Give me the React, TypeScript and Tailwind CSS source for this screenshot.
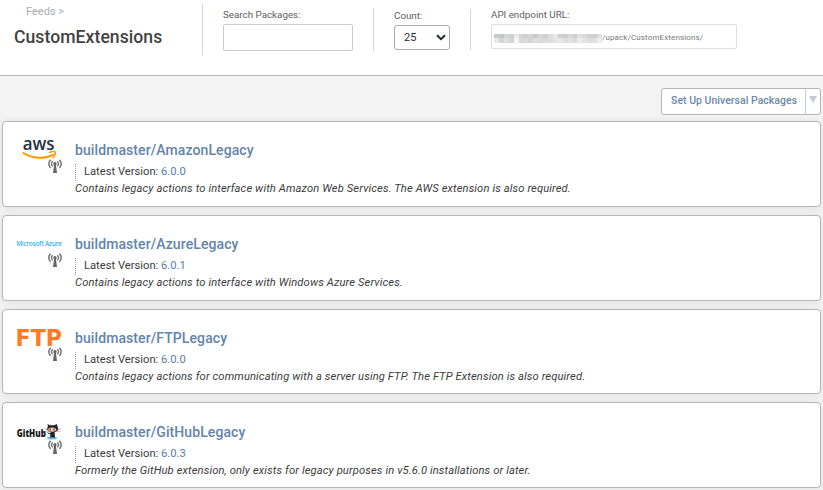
import React from "react";

type Pkg = {
  name: string;
  version: string;
  description: string;
  logo: React.ReactNode;
  card: string;
  text: string;
};

const AwsLogo = () => (
  <svg width="46" height="46" viewBox="0 0 46 46" className="block overflow-visible">
    <text x="5.800" y="14.900" fontFamily="'Open Sans', sans-serif" fontWeight="600" fontSize="18.500" fill="#252f3e" textLength="31.800" lengthAdjust="spacingAndGlyphs">aws</text>
    <path d="M6.4 18c9 5.800 21.500 6.200 29.500 1.800" fill="none" stroke="#f90" strokeWidth="2" strokeLinecap="round" />
    <path d="M32.500 17.500c2-1 5-1.300 5.700-.5.500 1-.4 3.900-2 5.500" fill="none" stroke="#f90" strokeWidth="1.600" strokeLinecap="round" />
  </svg>
);

const AzureLogo = () => (
  <svg width="46" height="46" viewBox="0 0 46 46" className="block overflow-visible">
    <text x="-0.400" y="17" fontFamily="'Open Sans', sans-serif" fontSize="6.400" fill="#1badea" stroke="#1badea" strokeWidth="0.150" textLength="45" lengthAdjust="spacingAndGlyphs">Microsoft Azure</text>
  </svg>
);

const FtpLogo = () => (
  <svg width="46" height="46" viewBox="0 0 46 46" className="block overflow-visible">
    <text x="-1.500" y="22.600" fontFamily="'DejaVu Sans', sans-serif" fontWeight="700" fontSize="22.500" fill="#ff7a22" textLength="46.500" lengthAdjust="spacingAndGlyphs">FTP</text>
  </svg>
);

const GitHubLogo = () => (
  <svg width="46" height="46" viewBox="0 0 46 46" className="block overflow-visible">
    <text x="-0.200" y="20.600" fontFamily="'Open Sans', sans-serif" fontWeight="800" fontSize="10.500" fill="#151515" textLength="29" lengthAdjust="spacingAndGlyphs">GitHub</text>
    <g transform="translate(-.5 -2.700)">
      <ellipse cx="35.500" cy="24.700" rx="5" ry="1.500" fill="#66c5ee" />
      <path d="M31 10.700l2.500 1.200h4.200l2.700-1.200.7 2.800c1.400 3-.3 5-3 5.400l.5 5.300h-5l.3-3.200c-2 .2-2.500-1-3.500-1.700 1.600-.2 2 .9 3.500.5l.2-1c-3.200-.4-4.200-3-2.700-5.600z" fill="#252326" />
      <ellipse cx="35.700" cy="16.300" rx="4" ry="2.200" fill="#f3c6ac" />
      <path d="M33.700 15.300v1.900M37.700 15.300v1.900" stroke="#75382f" strokeWidth="1.300" />
      <path d="M28 15.700l3 .5M40.600 16.200l3.700-.5M28.300 18.500l2.900-1M40.500 17.500l3 .8" stroke="#777" strokeWidth="0.600" />
    </g>
  </svg>
);

const FeedIcon = () => (
  <svg width="14" height="15" viewBox="0 0 14 15" fill="none" stroke="#707070" className="block">
    <path d="M2.600.8C.2 2.800.2 6.800 2.600 8.800M11.400.8c2.400 2 2.400 6 0 8" strokeWidth="1.500" />
    <path d="M4.700 2.300c-1.400 1.400-1.400 3.600 0 5M9.300 2.300c1.400 1.400 1.400 3.600 0 5" strokeWidth="1.300" />
    <circle cx="7" cy="4.800" r="1.700" fill="#666" stroke="none" />
    <path d="M6.200 5h1.600l1.200 9H5z" fill="#666" stroke="none" />
  </svg>
);

const packages: Pkg[] = [
  { name: "buildmaster/AmazonLegacy", version: "6.0.0", description: "Contains legacy actions to interface with Amazon Web Services. The AWS extension is also required.", logo: <AwsLogo />, card: "h-[86px] mb-[8px]", text: "pt-[18px]" },
  { name: "buildmaster/AzureLegacy", version: "6.0.1", description: "Contains legacy actions to interface with Windows Azure Services.", logo: <AzureLogo />, card: "h-[86px] mb-[8px]", text: "pt-[18px]" },
  { name: "buildmaster/FTPLegacy", version: "6.0.0", description: "Contains legacy actions for communicating with a server using FTP. The FTP Extension is also required.", logo: <FtpLogo />, card: "h-[85px] mb-[8px]", text: "pt-[18px]" },
  { name: "buildmaster/GitHubLegacy", version: "6.0.3", description: "Formerly the GitHub extension, only exists for legacy purposes in v5.6.0 installations or later.", logo: <GitHubLogo />, card: "h-[86px]", text: "pt-[19px]" },
];

const PackageCard = ({ pkg }: { pkg: Pkg }) => (
  <article className={`flex rounded-[4px] border border-[#b5b5b5] bg-white pl-[14px] shadow-[0_1px_8px_rgba(0,0,0,0.08)] ${pkg.card}`}>
    <div className="relative mt-[13px] h-[46px] w-[46px] shrink-0">
      {pkg.logo}
      <div className="absolute top-[24px] left-[31px]"><FeedIcon /></div>
    </div>
    <div className={`ml-[12px] whitespace-nowrap ${pkg.text}`}>
      <h2 className="h-[20px] text-[14px] leading-[20px] font-medium tracking-[0.090px] text-[#6384ac]">{pkg.name}</h2>
      <div className="mt-[4px] h-[17px] border-l border-dotted border-[#999] pl-[8px] text-[11.200px] leading-[15px] text-[#3b3b3b]">
        Latest Version: <span className="text-[#587ca6]">{pkg.version}</span>
      </div>
      <p className="text-[11.200px] leading-[15px] tracking-[0.115px] text-[#3b3b3b] italic">{pkg.description}</p>
    </div>
  </article>
);

const mosaic = [
  "bg-[#c9caca]", "bg-[#c5c6c6]", "bg-[#d6d6d6]", "bg-[#d0d1d1]", "bg-[#ececec]", "bg-[#d4d5d5]", "bg-[#cecfcf]", "bg-[#d4d4d4]",
  "bg-[#c9caca]", "bg-[#d8d8d8]", "bg-[#d0d0d0]", "bg-[#dedede]", "bg-[#e7e7e7]", "bg-[#d0d0d0]", "bg-[#cdcece]", "bg-[#d6d6d6]",
  "bg-[#cccdcd]", "bg-[#e1e1e1]", "bg-[#dadada]", "bg-[#d0d1d1]", "bg-[#cecfcf]", "bg-[#dedede]",
  "bg-[#e8e8e8]", "bg-[#d4d4d4]", "bg-[#dedede]", "bg-[#d5d5d5]", "bg-[#f5f5f5]", "bg-[#d7d7d7]", "bg-[#dadada]", "bg-[#d5d5d5]",
  "bg-[#dedede]", "bg-[#dadada]", "bg-[#dadada]", "bg-[#dedede]", "bg-[#e3e3e3]", "bg-[#e8e8e8]", "bg-[#dedede]", "bg-[#e3e3e3]",
  "bg-[#dcdcdc]", "bg-[#ebebeb]", "bg-[#e3e3e3]", "bg-[#dedede]", "bg-[#e0e0e0]", "bg-[#eeeeee]",
];

export default function App() {
  return (
    <div className="h-[490px] w-[823px] overflow-hidden bg-[#f3f3f4] font-[Roboto,sans-serif] text-[#333]">
      <header className="flex h-[76px] border-b border-[#b8b8b8] bg-white whitespace-nowrap">
        <div className="mt-[4px] h-[51px] w-[203px] border-r border-[#d5d5d5] pl-[14px]">
          <div className="pt-[1px] pl-[12px] text-[11px] leading-[14px] text-[#a6adb3]">Feeds &gt;</div>
          <h1 className="mt-[6px] text-[17.600px] leading-[24px] font-medium tracking-[0.050px] text-[#424242]">CustomExtensions</h1>
        </div>
        <label className="mt-[8px] h-[43px] w-[171px] border-r border-[#d5d5d5] pl-[20px] text-[9.800px] leading-[14px] text-[#606060]">
          Search Packages:
          <input className="mt-[2px] block h-[27px] w-[130px] rounded-[2px] border border-[#c9cbd1] bg-white" />
        </label>
        <label className="mt-[9px] h-[41px] w-[97px] border-r border-[#d5d5d5] pl-[20px] text-[9.800px] leading-[14px] text-[#606060]">
          Count:
          <span className="mt-[2px] flex h-[25px] w-[56px] items-center justify-between rounded-[3px] border border-[#aaa] bg-white pr-[3px] pl-[9px] text-[11px] text-[#2b2b2b]">
            25
            <svg width="10" height="7" viewBox="0 0 10 7"><path d="M1 1.200l4 3.900 4-3.900" fill="none" stroke="#22252b" strokeWidth="2" /></svg>
          </span>
        </label>
        <div className="mt-[8px] pl-[20px] text-[9.800px] leading-[14px] text-[#606060]">
          API endpoint URL:
          <div className="mt-[2px] flex h-[25px] w-[246px] items-center rounded-[2px] border border-[#dcdce2] pl-[2px]">
            <div className="mt-[3px] grid h-[9px] w-[108px] grid-cols-22 grid-rows-2">
              {mosaic.map((tone, i) => <i key={i} className={tone} />)}
            </div>
            <span className="mt-[2px] text-[8px] tracking-[0.120px] text-[#777]">/upack/CustomExtensions/</span>
          </div>
        </div>
      </header>
      <main className="pr-[2px] pl-[2px]">
        <div className="flex h-[45px] justify-end pt-[12px]">
          <button className="flex h-[27px] w-[160px] items-center rounded-[3px] border border-[#b5b5b5] bg-white text-[10.500px] font-medium whitespace-nowrap text-[#6c87ae]">
            <span className="w-[143px] pb-[1px] pl-[9px] text-left tracking-[0.020px]">Set Up Universal Packages</span>
            <span className="flex h-full w-[15px] items-center justify-center border-l border-[#c4ced0] pb-[4px]">
              <svg width="8" height="7" viewBox="0 0 8 7"><path d="M0 0h8L4 7z" fill="#c1cdd0" /></svg>
            </span>
          </button>
        </div>
        {packages.map((pkg) => <PackageCard key={pkg.name} pkg={pkg} />)}
      </main>
    </div>
  );
}
